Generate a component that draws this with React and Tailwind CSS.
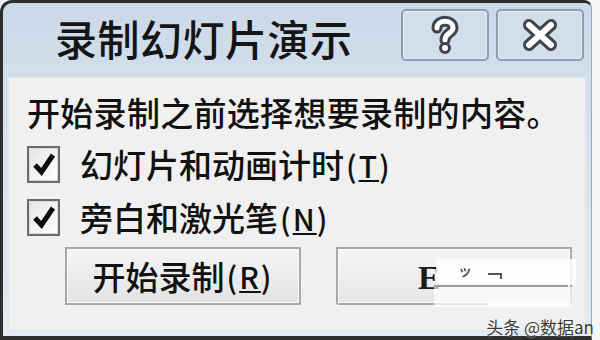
import React from "react";

const cjk = { fontFamily: '"Noto Sans CJK SC", "Noto Sans", sans-serif' };

function HelpIcon() {
  return (
    <svg width="36" height="40" viewBox="0 0 36 40">
      <g fill="none" strokeLinecap="round" strokeLinejoin="round">
        <path d="M10 13 C10 4 26 4 26 13 C26 18 18 18 18 25" stroke="#3f444c" strokeWidth="11" />
        <path d="M10 13 C10 4 26 4 26 13 C26 18 18 18 18 25" stroke="#ffffff" strokeWidth="5" />
        <circle cx="18" cy="33" r="4.5" fill="#ffffff" stroke="#3f444c" strokeWidth="3" />
      </g>
    </svg>
  );
}

function CloseIcon() {
  return (
    <svg width="42" height="36" viewBox="0 0 42 36">
      <g fill="none" strokeLinecap="round">
        <path d="M10 8 L32 28 M32 8 L10 28" stroke="#3f444c" strokeWidth="12" />
        <path d="M10 8 L32 28 M32 8 L10 28" stroke="#ffffff" strokeWidth="6" />
      </g>
    </svg>
  );
}

function Check() {
  return (
    <div className="w-[33px] h-[37px] border-2 border-[#6c6c6c] bg-white flex items-center justify-center shrink-0">
      <div className="w-full h-full border border-[#d8d8d8] bg-gradient-to-br from-[#e6e6e6] to-white flex items-center justify-center">
        <svg width="24" height="26" viewBox="0 0 24 26">
          <path d="M3 14 L9.5 21 L21 4" fill="none" stroke="#0d0d0d" strokeWidth="5" strokeLinejoin="miter" />
        </svg>
      </div>
    </div>
  );
}

function Key({ k }) {
  return (
    <span className="text-[30px] ml-[2px] tracking-[2px]">
      (<span className="underline decoration-2 underline-offset-2">{k}</span>)
    </span>
  );
}

export default function App() {
  return (
    <div className="relative w-[600px] h-[340px] bg-[#f4f6f8] overflow-hidden" style={cjk}>
      <div className="w-[592px] h-[340px] border-l-[3px] border-t-[3px] border-b-[4px] border-r border-l-[#2e2e2e] border-t-[#2e2e2e] border-b-[#2e2e2e] border-r-[#9aa8b8] rounded-tl-[12px] rounded-tr-[8px] bg-gradient-to-b from-[#cbd9e8] via-[#dae4ef] to-[#e2eaf3] flex flex-col">
        <div className="h-[74px] flex items-center shrink-0">
          <div className="pl-[52px] text-[42px] leading-none font-medium text-[#151515] tracking-[0.5px] mt-[-4px]">
            录制幻灯片演示
          </div>
          <div className="ml-auto mr-[7px] flex gap-[7px] mt-[-10px]">
            <div className="w-[88px] h-[52px] rounded-[5px] border-2 border-[#8e9db1] bg-[#d2deea] flex items-center justify-center shadow-[inset_0_0_0_1px_#e6edf5]">
              <HelpIcon />
            </div>
            <div className="w-[88px] h-[52px] rounded-[5px] border-2 border-[#8e9db1] bg-[#d2deea] flex items-center justify-center shadow-[inset_0_0_0_1px_#e6edf5]">
              <CloseIcon />
            </div>
          </div>
        </div>
        <div className="mx-[5px] mb-[5px] flex-1 bg-[#f0f0f0] border border-[#dfe6ee] flex flex-col pl-[18px] text-[#111] font-medium">
          <div className="mt-[14px] text-[33px] leading-[40px] tracking-[0.3px]">
            开始录制之前选择想要录制的内容。
          </div>
          <div className="mt-[12px] flex items-center h-[40px]">
            <Check />
            <div className="ml-[20px] text-[33px] leading-none">
              幻灯片和动画计时<Key k="T" />
            </div>
          </div>
          <div className="mt-[13px] flex items-center h-[40px]">
            <Check />
            <div className="ml-[20px] text-[33px] leading-none">
              旁白和激光笔<Key k="N" />
            </div>
          </div>
          <div className="mt-[10px] flex gap-[35px] pl-[38px]">
            <div className="w-[236px] h-[58px] border-2 border-[#a9a9a9] bg-gradient-to-b from-[#f5f5f5] to-[#e3e3e3] flex items-center justify-center text-[33px] leading-none shadow-[inset_0_0_0_1px_#fbfbfb]">
              开始录制<Key k="R" />
            </div>
            <div className="relative w-[236px] h-[58px] border-2 border-[#a9a9a9] border-b-transparent bg-gradient-to-b from-[#f5f5f5] to-[#e6e6e6] shadow-[inset_0_0_0_1px_#fbfbfb]">
              <div className="absolute left-0 bottom-[-2px] w-[150px] h-[2px] bg-[#a9a9a9]" />
              <div className="absolute left-[80px] top-[12px] text-[34px] leading-none font-bold text-[#1a1a1a]" style={{ fontFamily: '"Liberation Serif", serif' }}>
                E
              </div>
              <div className="absolute left-[98px] top-[10px] w-[140px] h-[26px] bg-white/85" />
              <div className="absolute left-[120px] top-[14px] text-[14px] leading-none text-[#333]">ッ</div>
              <div className="absolute left-[150px] top-[24px] w-[14px] h-[2px] bg-[#555]" />
              <div className="absolute left-[162px] top-[24px] w-[2px] h-[6px] bg-[#555]" />
              <div className="absolute left-[96px] top-[36px] w-[134px] h-[2px] bg-[#9c9c9c]" />
              <div className="absolute left-[96px] top-[38px] w-[138px] h-[20px] bg-white/70" />
            </div>
          </div>
        </div>
      </div>
      <div className="absolute right-[6px] bottom-[5px] text-[17px] leading-none text-[#3a3a3a] [text-shadow:0_0_2px_#fff]">
        头条 @数据an
      </div>
    </div>
  );
}
